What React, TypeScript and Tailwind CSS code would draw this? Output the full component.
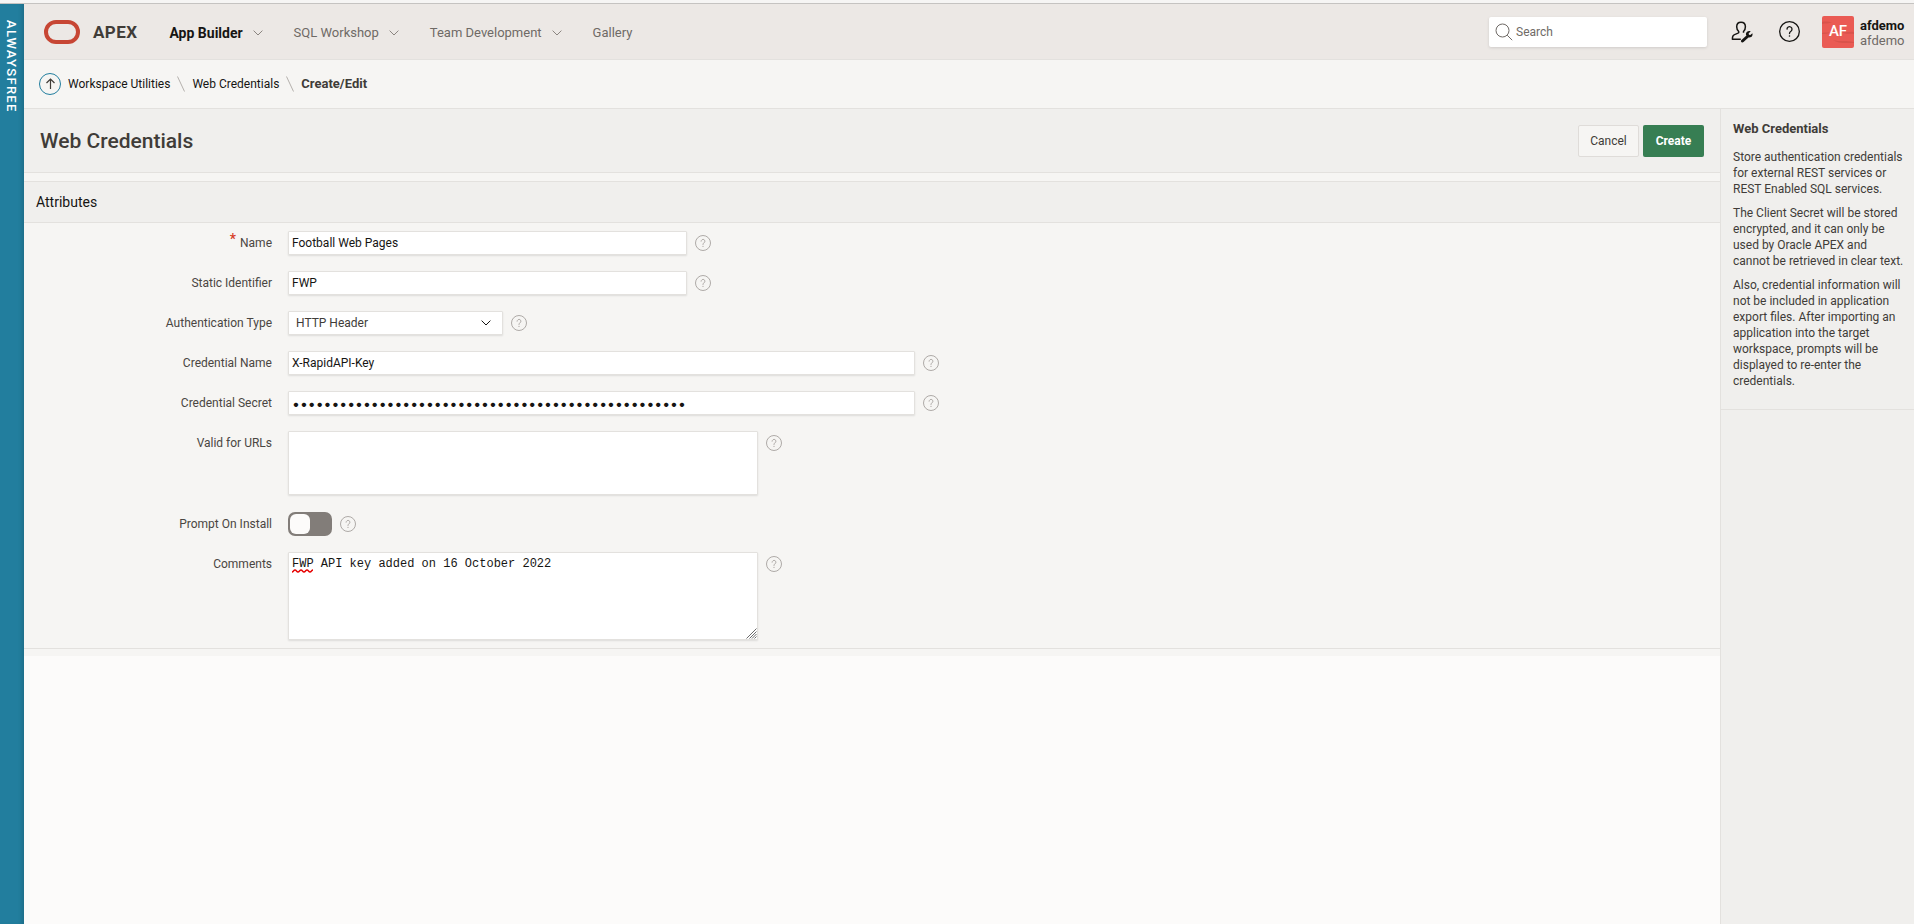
import type { ReactNode } from "react";

const NAV_ITEMS = [
  { label: "App Builder", hasMenu: true, active: true },
  { label: "SQL Workshop", hasMenu: true, active: false },
  { label: "Team Development", hasMenu: true, active: false },
  { label: "Gallery", hasMenu: false, active: false },
];

const HELP_TEXT = [
  "Store authentication credentials for external REST services or REST Enabled SQL services.",
  "The Client Secret will be stored encrypted, and it can only be used by Oracle APEX and cannot be retrieved in clear text.",
  "Also, credential information will not be included in application export files. After importing an application into the target workspace, prompts will be displayed to re-enter the credentials.",
];

const FIELD =
  "block max-w-full rounded-[1px] border border-[#e3e1de] bg-white shadow-[0_1px_2px_rgba(0,0,0,0.1)] outline-none";

function Chevron({ className }: { className: string }) {
  return (
    <svg viewBox="0 0 10 6" fill="none" stroke="currentColor" className={className}>
      <path d="M0.6 0.6 5 5 9.4 0.6" />
    </svg>
  );
}

function HelpIcon({ className }: { className: string }) {
  return (
    <svg viewBox="0 0 16 16" fill="none" stroke="currentColor" className={className}>
      <circle cx="8" cy="8" r="7.5" />
      <path d="M6.1 6.2a1.9 1.9 0 1 1 3 1.6c-.8.5-1.1.8-1.1 1.7" strokeLinecap="round" />
      <circle cx="8" cy="11.4" r="0.6" fill="currentColor" stroke="none" />
    </svg>
  );
}

function AdminIcon() {
  return (
    <svg viewBox="0 0 22 22" fill="none" stroke="currentColor" className="size-[22px]">
      <path
        d="M10 1.2c-2.7 0-4.3 2-4.3 4.6 0 2 .8 3.7 2 4.7v1.3c-.2.6-4.8 1.4-5.7 3-.5.9-.6 2.4-.6 3.4h8.4M12.5 11.8v-1.3c1.2-1 1.9-2.7 1.9-4.7 0-2.6-1.7-4.6-4.4-4.6"
        strokeWidth="1.5"
        strokeLinejoin="round"
      />
      <path d="m11.5 20 5.5-5" strokeWidth="3" strokeLinecap="round" />
      <path
        d="m19.7 10.3-2.1 2.1.3 1.4 1.4.3 2.1-1.9c.5 1.7-.2 3.1-1.3 3.8-1 .6-2.2.6-3.2.1l-1.8-2c-.4-1.2-.1-2.3.7-3.1 1-.9 2.5-1.2 3.9-.7Z"
        fill="currentColor"
        stroke="none"
      />
    </svg>
  );
}

function Header() {
  return (
    <header className="flex h-14 items-center border-b border-[#e3e1de] bg-[#ece8e5] pr-2 pl-5">
      <a href="#home" className="flex items-center gap-[13px]">
        <svg viewBox="0 0 36 24" fill="none" className="h-6 w-9">
          <rect x="2" y="2" width="32" height="20" rx="10" stroke="#c74634" strokeWidth="4" />
        </svg>
        <span className="text-[17px] leading-6 font-bold tracking-wide text-[#403c38]">APEX</span>
      </a>
      <nav className="ml-8 flex items-center gap-[31px] pt-0.5">
        {NAV_ITEMS.map((item) => (
          <button
            key={item.label}
            type="button"
            className={
              item.active
                ? "flex items-center gap-[10px] text-sm font-bold text-[#161513]"
                : "flex items-center gap-[10px] text-[13px] text-[#6f6a66]"
            }
          >
            {item.label}
            {item.hasMenu && <Chevron className="h-[6px] w-[10px] text-[#8b8580]" />}
          </button>
        ))}
      </nav>
      <div className="ml-auto flex items-center">
        <label className="flex h-[30px] w-[218px] items-center gap-[3px] rounded-[2px] bg-white pl-[6px] shadow-[0_1px_3px_rgba(0,0,0,0.12)]">
          <svg viewBox="0 0 18 18" fill="none" stroke="#6f6a66" className="size-[18px]">
            <circle cx="7.5" cy="7.5" r="6.5" />
            <path d="m12.2 12.2 5 5" />
          </svg>
          <input
            type="text"
            aria-label="Search"
            placeholder="Search"
            className="min-w-0 flex-1 text-xs text-[#161513] outline-none placeholder:text-[#6f6a66]"
          />
        </label>
        <button type="button" aria-label="Administration" className="ml-6 text-[#161513]">
          <AdminIcon />
        </button>
        <button type="button" aria-label="Help" className="ml-[26px] text-[#161513]">
          <HelpIcon className="size-[21px]" />
        </button>
        <button type="button" className="ml-[22px] flex items-center gap-[6px] text-left">
          <span className="relative flex size-8 items-center justify-center overflow-hidden rounded-[2px] bg-[#ea5b54] text-[15px] font-medium text-white">
            <svg viewBox="0 0 32 32" fill="#d9534b" className="absolute inset-0 size-8">
              <path d="M0 6c4-1 6 0 10 0-3 2-7 1-10 2Z" />
              <path d="M20 16c4 1 8-1 12 0v2c-4-1-8 1-12-2Z" />
              <path d="M11 24c6 2 14 0 21 2v1c-8 0-16 1-21-3Z" />
              <path d="M0 17c3-1 5 0 8-1-2 2-5 2-8 2Z" />
            </svg>
            <span className="relative">AF</span>
          </span>
          <span className="block w-[46px] pt-0.5">
            <span className="block text-[13px] leading-[15px] font-bold text-[#161513]">afdemo</span>
            <span className="block text-[13px] leading-[15px] text-[#6f6a66]">afdemo</span>
          </span>
        </button>
      </div>
    </header>
  );
}

function Separator() {
  return (
    <svg viewBox="0 0 8 16" fill="none" stroke="#b4b0ac" className="h-4 w-2">
      <path d="M0.5 0.5 7.5 15.5" />
    </svg>
  );
}

function Breadcrumbs() {
  return (
    <nav
      aria-label="Breadcrumb"
      className="flex h-[49px] items-center gap-[7px] border-b border-[#e3e1de] bg-[#f6f5f3] pl-[15px] text-xs text-[#161513]"
    >
      <a href="#up" aria-label="Up">
        <svg viewBox="0 0 22 22" fill="none" className="size-[22px]">
          <circle cx="11" cy="11" r="10.5" stroke="#227e9e" />
          <path d="M11.5 16V6.5M7.5 10l4-4 4 4" stroke="#403c38" strokeWidth="1.2" />
        </svg>
      </a>
      <a href="#utilities">Workspace Utilities</a>
      <Separator />
      <a href="#credentials">Web Credentials</a>
      <Separator />
      <span className="text-[13px] font-bold text-[#403c38]">Create/Edit</span>
    </nav>
  );
}

interface FieldRowProps {
  id: string;
  label: string;
  required?: boolean;
  children: ReactNode;
}

function FieldRow({ id, label, required, children }: FieldRowProps) {
  return (
    <div className="flex items-start py-2">
      <label htmlFor={id} className="flex w-[248px] shrink-0 justify-end leading-6 text-[#4a4642]">
        {required && <span className="mr-1 text-sm leading-4 font-medium text-[#d63b25]">*</span>}
        {label}
      </label>
      <div className="ml-4 flex min-w-0 items-start gap-2">
        {children}
        <button type="button" aria-label={`Help for ${label}`} className="mt-1 shrink-0 text-[#aeaaa7]">
          <HelpIcon className="size-4" />
        </button>
      </div>
    </div>
  );
}

function CredentialForm() {
  return (
    <form className="bg-[#f6f5f3] text-xs text-[#161513]">
      <FieldRow id="name" label="Name" required>
        <input id="name" type="text" defaultValue="Football Web Pages" className={`${FIELD} h-6 w-[399px] px-[3px]`} />
      </FieldRow>
      <FieldRow id="static-id" label="Static Identifier">
        <input id="static-id" type="text" defaultValue="FWP" className={`${FIELD} h-6 w-[399px] px-[3px]`} />
      </FieldRow>
      <FieldRow id="auth-type" label="Authentication Type">
        <div className="relative">
          <select
            id="auth-type"
            defaultValue="header"
            className={`${FIELD} h-6 w-[215px] appearance-none px-[7px] text-[#403c38]`}
          >
            <option value="header">HTTP Header</option>
            <option value="basic">Basic Authentication</option>
          </select>
          <Chevron className="pointer-events-none absolute top-[9px] right-3 h-[6px] w-[10px] text-[#161513]" />
        </div>
      </FieldRow>
      <FieldRow id="cred-name" label="Credential Name">
        <input id="cred-name" type="text" defaultValue="X-RapidAPI-Key" className={`${FIELD} h-6 w-[627px] px-[3px]`} />
      </FieldRow>
      <FieldRow id="cred-secret" label="Credential Secret">
        <input
          id="cred-secret"
          type="password"
          defaultValue={"x".repeat(50)}
          className={`${FIELD} h-6 w-[627px] px-[3px] font-['Inter',sans-serif] text-sm`}
        />
      </FieldRow>
      <FieldRow id="urls" label="Valid for URLs">
        <textarea id="urls" className={`${FIELD} mb-px h-16 w-[470px] resize-none`} />
      </FieldRow>
      <FieldRow id="prompt" label="Prompt On Install">
        <span className="relative block h-6 w-11">
          <input
            id="prompt"
            type="checkbox"
            role="switch"
            className="peer block h-6 w-11 appearance-none rounded-[7px] bg-[#827d79] checked:bg-[#227e9e]"
          />
          <span className="pointer-events-none absolute top-[2px] left-[2px] size-5 rounded-[6px] bg-[#fcfbfa] peer-checked:left-[22px]" />
        </span>
      </FieldRow>
      <FieldRow id="comments" label="Comments">
        <div className="relative">
          <textarea
            id="comments"
            spellCheck={false}
            defaultValue="FWP API key added on 16 October 2022"
            className={`${FIELD} h-[88px] w-[470px] resize-none p-[3px] font-['Liberation_Mono',monospace] leading-4`}
          />
          <svg
            viewBox="0 0 22 4"
            fill="none"
            stroke="#e60000"
            className="pointer-events-none absolute top-[17px] left-1 h-1 w-[22px]"
          >
            <path
              d="M0 3c1.5 0 1.5-2 3-2s1.5 2 3 2 1.5-2 3-2 1.5 2 3 2 1.5-2 3-2 1.5 2 3 2 1.5-2 3-2"
              strokeWidth="1.3"
            />
          </svg>
          <svg
            viewBox="0 0 11 11"
            fill="none"
            stroke="#6b6b6b"
            className="pointer-events-none absolute right-[1px] bottom-[1px] size-[11px]"
          >
            <path d="M0.5 10.5 10.5 0.5M3.5 10.5l7-7M6 10.5 10.5 6M8.5 10.5l2-2" />
          </svg>
        </div>
      </FieldRow>
    </form>
  );
}

export default function App() {
  return (
    <div className="flex min-h-screen flex-col bg-[#fcfbfa] font-['Roboto','Open_Sans',sans-serif]">
      <div className="h-1 border-b border-[#c5c3c1] bg-[#f6f5f4]" />
      <div className="flex flex-1">
        <div className="w-6 shrink-0 bg-[#227e9e] pt-4 shadow-[inset_-4px_0_4px_-2px_rgba(0,0,0,0.15)]">
          <span className="block text-[13px] leading-[22px] font-medium tracking-widest text-white [writing-mode:vertical-rl]">
            ALWAYSFREE
          </span>
        </div>
        <div className="flex min-w-0 flex-1 flex-col">
          <Header />
          <Breadcrumbs />
          <div className="flex flex-1">
            <main className="min-w-0 flex-1">
              <div className="flex h-16 items-center gap-1 border-b border-[#e3e1de] bg-[#f0efed] px-4">
                <h1 className="mr-auto pt-0.5 text-[21px] font-medium text-[#403c38]">Web Credentials</h1>
                <button
                  type="button"
                  className="h-8 w-[61px] rounded-[2px] border border-[#dfdcd9] bg-[#f6f5f3] text-xs text-[#403c38]"
                >
                  Cancel
                </button>
                <button type="button" className="h-8 w-[61px] rounded-[2px] bg-[#377e53] text-xs font-bold text-white">
                  Create
                </button>
              </div>
              <section className="border-b-[7px] border-[#f6f5f3]">
                <div className="border-b border-[#e3e1de]">
                  <div className="h-2 bg-[#f6f5f3]" />
                  <h2 className="border-y border-[#e3e1de] bg-[#f0efed] pl-3 text-sm leading-10 text-[#161513]">
                    Attributes
                  </h2>
                  <CredentialForm />
                </div>
              </section>
            </main>
            <aside className="w-[194px] shrink-0 border-l border-[#e3e1de] bg-[#f0efed] text-xs leading-4 text-[#403c38]">
              <div className="border-b border-[#e3e1de] pt-3 pr-[9px] pb-5 pl-3">
                <h3 className="mb-3 text-[13px] leading-4 font-bold">Web Credentials</h3>
                {HELP_TEXT.map((text) => (
                  <p key={text} className="mt-2">
                    {text}
                  </p>
                ))}
              </div>
            </aside>
          </div>
        </div>
      </div>
    </div>
  );
}
